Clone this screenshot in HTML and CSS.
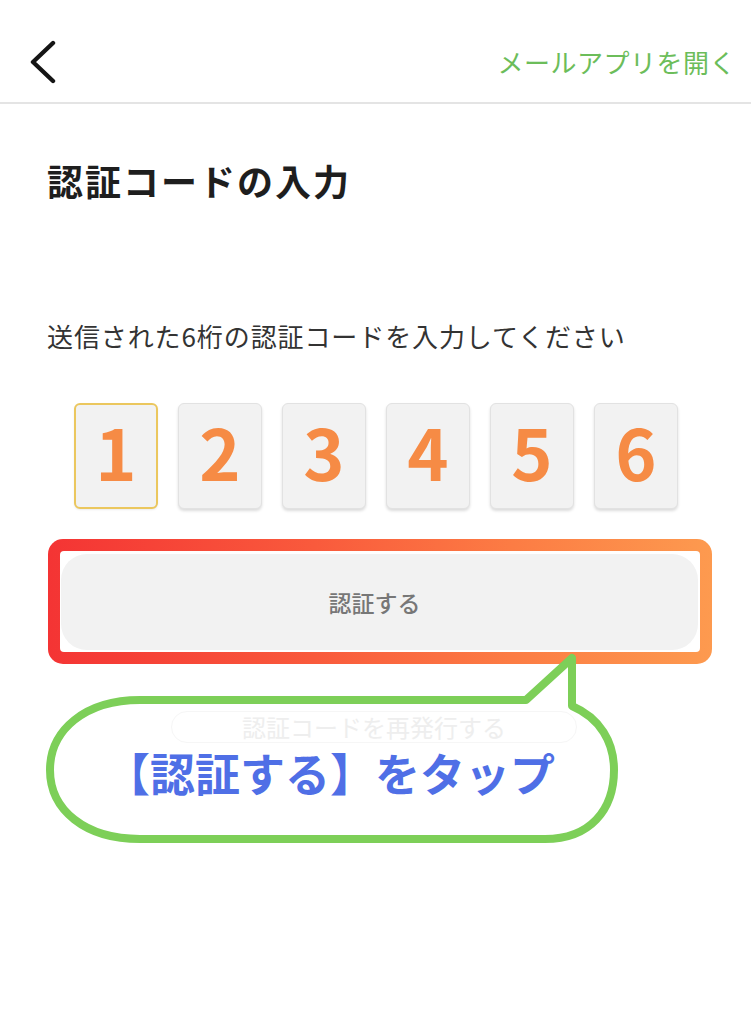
FILE: index.html
```html
<!DOCTYPE html>
<html lang="ja">
<head>
<meta charset="utf-8">
<title>認証コードの入力</title>
<link rel="stylesheet" href="styles.css">
</head>
<body>
<div class="page">
  <header class="topbar">
    <svg class="back" width="30" height="44" viewBox="0 0 30 44" aria-hidden="true">
      <path d="M25 3 L5 22 L25 41" fill="none" stroke="#151515" stroke-width="4.4" stroke-linecap="round" stroke-linejoin="round"/>
    </svg>
    <a class="mail-link">メールアプリを開く</a>
  </header>

  <main class="content">
    <h1 class="title">認証コードの入力</h1>
    <p class="lead">送信された6桁の認証コードを入力してください</p>

    <div class="code-row">
      <div class="code-box active">1</div>
      <div class="code-box">2</div>
      <div class="code-box">3</div>
      <div class="code-box">4</div>
      <div class="code-box">5</div>
      <div class="code-box">6</div>
    </div>

    <div class="highlight">
      <div class="highlight-inner">
        <button class="verify-btn">認証する</button>
      </div>
    </div>

    <div class="reissue-wrap">
      <button class="reissue-btn">認証コードを再発行する</button>
    </div>

    <div class="callout">
      <svg class="callout-shape" width="585" height="200" viewBox="0 0 585 200" aria-hidden="true">
        <path d="M100 50 L486 50 L532 8 L532 56 C560 68 574 92 574 120 C574 160 550 189 505 189 L100 189 C45 189 10 160 10 120 C10 80 45 50 100 50 Z" fill="none" stroke="#7dcf58" stroke-width="8" stroke-linejoin="round"/>
      </svg>
      <span class="callout-text">【認証する】をタップ</span>
    </div>
  </main>
</div>
</body>
</html>
```

FILE: styles.css
```css
* { box-sizing: border-box; }

html, body {
  margin: 0;
  padding: 0;
  background: #ffffff;
}

body {
  font-family: "Noto Sans CJK JP", "Noto Sans", sans-serif;
  color: #222;
}

.page {
  position: relative;
  width: 751px;
  min-height: 1024px;
}

.topbar {
  height: 104px;
  padding: 24px 15px 0 28px;
  display: flex;
  align-items: center;
  justify-content: space-between;
  border-bottom: 2px solid #e4e4e4;
}

.back { display: block; margin-top: -2px; }

.mail-link {
  font-size: 26px;
  line-height: 1;
  letter-spacing: 0.5px;
  color: #6cbd5a;
  margin-top: -2px;
}

.content {
  position: relative;
  padding: 58px 0 0 0;
}

.title {
  margin: 0 0 0 47px;
  font-size: 36px;
  line-height: 1;
  font-weight: 700;
  letter-spacing: 2px;
  color: #1e1e1e;
}

.lead {
  margin: 125px 0 0 47px;
  font-size: 26px;
  line-height: 1;
  font-weight: 400;
  color: #333;
  letter-spacing: 0.9px;
}

.code-row {
  margin: 54px 0 0 74px;
  display: flex;
  gap: 20px;
}

.code-box {
  width: 84px;
  height: 106px;
  background: #f2f2f2;
  border: 1px solid #e2e2e2;
  border-radius: 6px;
  box-shadow: 0 2px 3px rgba(0, 0, 0, 0.14);
  display: flex;
  align-items: center;
  justify-content: center;
  padding-bottom: 10px;
  font-size: 70px;
  line-height: 1;
  font-weight: 700;
  color: #f68b45;
}

.code-box.active {
  border: 2px solid #ebc75e;
  box-shadow: 0 1px 2px rgba(0, 0, 0, 0.08);
}

.highlight {
  margin: 30px 0 0 48px;
  width: 664px;
  padding: 12px;
  border-radius: 15px;
  background: linear-gradient(90deg, #f43434 0%, #f95a3c 40%, #fc7c44 70%, #fd9a4f 100%);
}

.highlight-inner {
  background: #ffffff;
  border-radius: 4px;
  padding: 3px 2px 2px 1px;
}

.verify-btn {
  display: flex;
  align-items: center;
  justify-content: center;
  width: 100%;
  height: 96px;
  border: none;
  border-radius: 26px;
  background: #f2f2f2;
  font-family: "Noto Sans CJK JP", sans-serif;
  font-size: 23px;
  font-weight: 500;
  color: #777;
  padding: 0 10px 0 0;
}

.reissue-wrap {
  margin-top: 47px;
  display: flex;
  justify-content: center;
  padding-right: 3px;
}

.reissue-btn {
  width: 406px;
  height: 32px;
  border: 1px solid #f6f6f6;
  border-radius: 16px;
  background: #ffffff;
  font-family: "Noto Sans CJK JP", sans-serif;
  font-size: 24px;
  line-height: 1;
  color: #eeeeee;
  padding: 0;
}

.callout {
  position: absolute;
  left: 40px;
  top: 546px;
  width: 585px;
  height: 200px;
}

.callout-shape {
  position: absolute;
  left: 0;
  top: 0;
}

.callout-text {
  position: absolute;
  left: 65px;
  top: 100px;
  font-size: 45px;
  line-height: 1;
  font-weight: 700;
  color: #4f6fe6;
  white-space: nowrap;
}
```
